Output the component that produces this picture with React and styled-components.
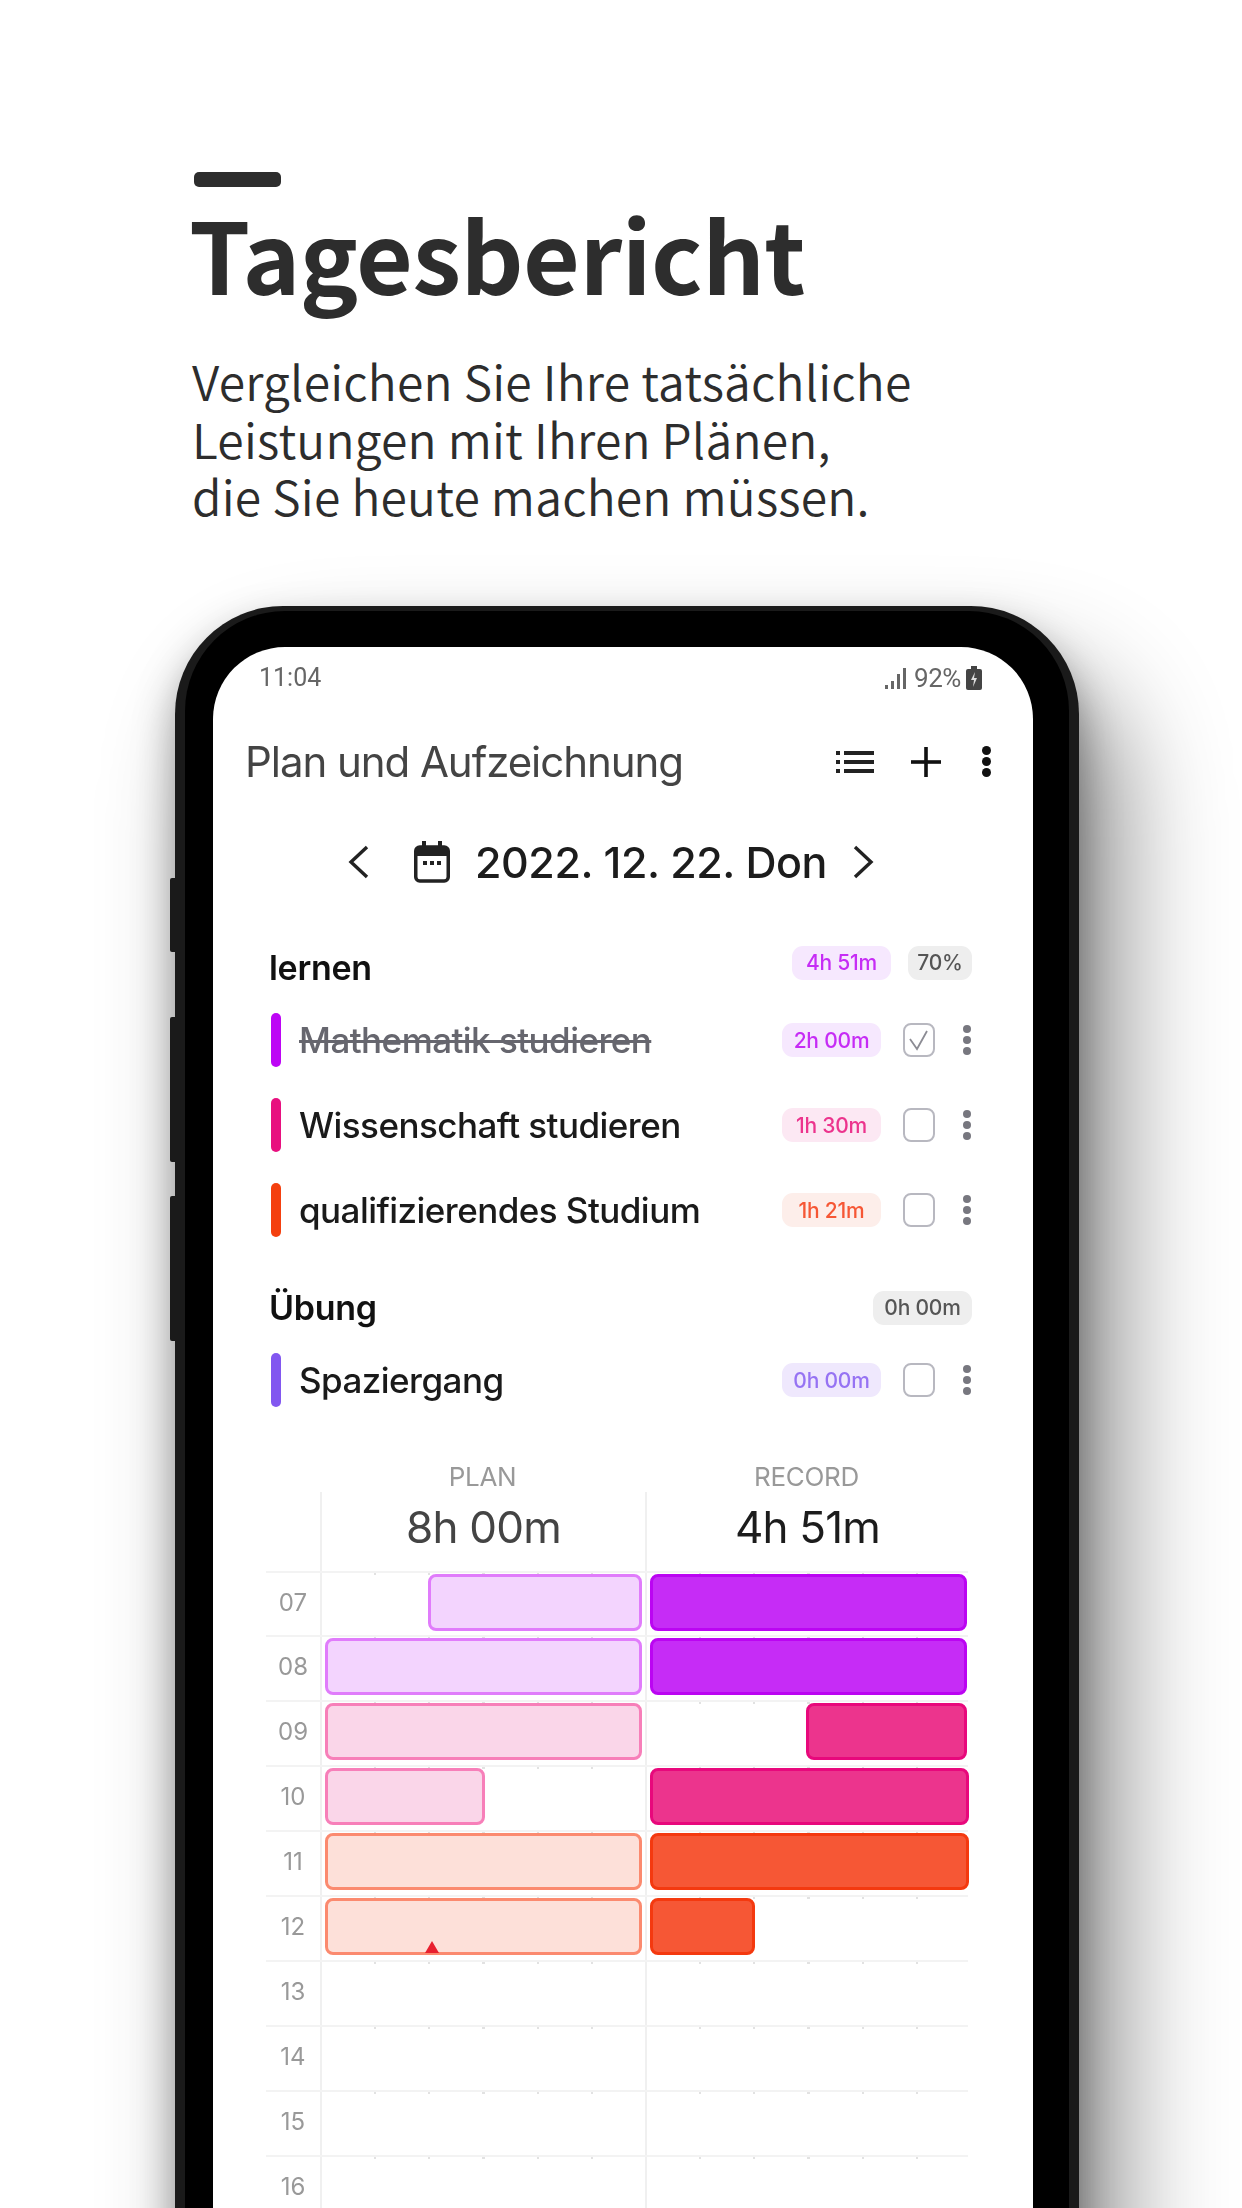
import React from 'react';
import styled, { createGlobalStyle } from 'styled-components';

const GlobalStyle = createGlobalStyle`
  html, body {
    margin: 0;
    padding: 0;
    background: #fff;
  }
`;

const Page = styled.div`
  width: 1242px;
  height: 2208px;
  overflow: hidden;
  background: #fff;
  color: #2d2d2d;
  font-family: 'Noto Sans CJK KR', 'Noto Sans', sans-serif;
`;

const Intro = styled.header`
  padding: 172px 0 0 193px;
`;

const Dash = styled.div`
  width: 87px;
  height: 15px;
  margin-left: 1px;
  border-radius: 5px;
  background: #2d2d2d;
`;

const Title = styled.h1`
  margin: 15px 0 0 -4px;
  font-size: 98px;
  font-weight: 700;
  line-height: 100px;
  letter-spacing: -0.5px;
`;

const Lead = styled.p`
  margin: 50px 0 0 -1px;
  font-size: 48px;
  font-weight: 350;
  line-height: 57.5px;
  letter-spacing: 0.2px;
`;

const Phone = styled.div`
  position: relative;
  box-sizing: border-box;
  width: 904px;
  height: 1700px;
  margin: 81px 0 0 175px;
  padding: 5px 10px 0;
  border-radius: 108px 108px 0 0;
  background: #1a1a1a;
  box-shadow: 0 20px 40px rgba(0, 0, 0, 0.35), 40px 70px 110px rgba(0, 0, 0, 0.45);
`;

const SideKey = styled.span`
  position: absolute;
  left: -5px;
  top: ${(p) => p.$top}px;
  width: 6px;
  height: ${(p) => p.$height}px;
  border-radius: 2px 0 0 2px;
  background: #1a1a1a;
`;

const Bezel = styled.div`
  box-sizing: border-box;
  height: 100%;
  padding: 36px 36px 0 28px;
  border-radius: 100px 100px 0 0;
  background: #000;
`;

const Screen = styled.div`
  height: 100%;
  border-radius: 72px 72px 0 0;
  background: #fff;
  color: #111;
  font-family: Inter, 'Liberation Sans', sans-serif;
  filter: blur(0.5px);
`;

const StatusBar = styled.div`
  display: flex;
  align-items: center;
  justify-content: space-between;
  height: 62px;
  padding: 0 51px 0 46px;
  color: #666;
  font-family: Roboto, sans-serif;
  font-size: 25px;
`;

const StatusRight = styled.div`
  display: flex;
  align-items: center;
  gap: 5px;
  font-size: 26px;
  letter-spacing: -0.4px;
`;

const AppBar = styled.div`
  display: flex;
  align-items: center;
  justify-content: space-between;
  height: 68px;
  margin-top: 19px;
  padding: 0 42px 0 32px;
`;

const AppTitle = styled.div`
  color: #444;
  font-size: 42px;
  letter-spacing: -1.05px;
`;

const AppActions = styled.div`
  display: flex;
  align-items: center;
  gap: 37px;

  svg:last-child {
    margin-left: 4px;
  }
`;

const DateBar = styled.div`
  display: flex;
  align-items: center;
  height: 60px;
  margin-top: 36px;
  padding-left: 134px;
`;

const DateText = styled.div`
  margin: 0 26px 0 25px;
  color: #1c1c1c;
  font-size: 43px;
  font-weight: 450;
  letter-spacing: -0.45px;
  white-space: nowrap;
`;

const CalendarSlot = styled.span`
  display: flex;
  margin-left: 45px;
`;

const Groups = styled.div`
  margin: 0 61px 0 56px;
  padding-top: 54px;
`;

const GroupHead = styled.div`
  display: flex;
  align-items: flex-start;
  justify-content: space-between;
  height: 52px;
  margin-top: ${(p) => p.$gap || 0}px;
`;

const GroupName = styled.div`
  font-size: 34px;
  font-weight: 600;
  line-height: 44px;
  letter-spacing: -0.3px;
`;

const GroupPills = styled.div`
  display: flex;
  gap: 17px;
  margin-top: ${(p) => p.$top || 0}px;
`;

const Pill = styled.span`
  display: flex;
  align-items: center;
  justify-content: center;
  box-sizing: border-box;
  width: ${(p) => p.$width}px;
  height: 34px;
  border-radius: 11px;
  background: ${(p) => p.$bg};
  color: ${(p) => p.$fg};
  font-size: 21px;
  font-weight: 500;
  letter-spacing: -0.2px;
  white-space: nowrap;
`;

const TaskRow = styled.div`
  display: flex;
  align-items: center;
  height: 85px;
`;

const TaskBar = styled.span`
  flex: none;
  width: 10px;
  height: 54px;
  margin-left: 2px;
  border-radius: 5px;
  background: ${(p) => p.$color};
`;

const TaskName = styled.span`
  flex: 1;
  margin-left: 18px;
  color: ${(p) => (p.$done ? '#66666e' : '#1a1a1a')};
  font-size: 35px;
  font-weight: 450;
  letter-spacing: -0.55px;
  text-decoration: ${(p) => (p.$done ? 'line-through' : 'none')};
`;

const Check = styled.span`
  display: flex;
  flex: none;
  align-items: center;
  justify-content: center;
  box-sizing: border-box;
  width: 32px;
  height: 34px;
  margin-left: 22px;
  border: 2.5px solid #b8b8c0;
  border-radius: 8px;
`;

const KebabSlot = styled.span`
  display: flex;
  flex: none;
  margin: 0 1px 0 28px;
`;

const Chart = styled.div`
  margin: 39px 65px 0 53px;
`;

const ChartGrid = styled.div`
  display: grid;
  grid-template-columns: 54px 325px 323px;
`;

const ColumnLabel = styled.div`
  color: #999;
  font-size: 26px;
  line-height: 30px;
  text-align: center;
  letter-spacing: -0.3px;
`;

const ColumnTotal = styled.div`
  box-sizing: border-box;
  height: 79px;
  padding-top: 10px;
  border-left: 2px solid #f0f0f0;
  color: ${(p) => p.$color};
  font-size: 44px;
  line-height: 50px;
  text-align: center;
  letter-spacing: -0.8px;
`;

const HourRow = styled.div`
  display: grid;
  grid-column: 1 / -1;
  grid-template-columns: 54px 325px 323px;
  box-sizing: border-box;
  height: 64.9px;
  border-top: 2px solid #f3f3f3;
`;

const HourLabel = styled.div`
  color: #999;
  font-size: 24px;
  line-height: 59px;
  text-align: center;
`;

const Cell = styled.div`
  box-sizing: border-box;
  padding-top: 1px;
  border-left: 2px solid #f0f0f0;
  background: repeating-linear-gradient(90deg, transparent 0 52px, #e2e2e2 52px 54.2px) 0 0 / 100% 2px no-repeat;
`;

const Block = styled.div`
  position: relative;
  box-sizing: border-box;
  width: ${(p) => p.$width}px;
  height: 57px;
  margin-left: ${(p) => p.$left}px;
  border: 3px solid ${(p) => p.$border};
  border-radius: 8px;
  background: ${(p) => p.$fill};
`;

const NowMark = styled.span`
  position: absolute;
  left: 97px;
  bottom: -1px;
  width: 0;
  height: 0;
  border-right: 7px solid transparent;
  border-bottom: 12px solid #e8202f;
  border-left: 7px solid transparent;
`;

const Signal = () => (
  <svg width="24" height="24" viewBox="0 0 24 24" fill="#666">
    <rect x="0" y="19" width="3" height="4" />
    <rect x="6" y="15" width="3" height="8" />
    <rect x="12" y="8" width="3" height="15" />
    <rect x="18" y="2" width="3" height="21" />
  </svg>
);

const Battery = () => (
  <svg width="16" height="24" viewBox="0 0 16 24">
    <rect x="5" y="0" width="6" height="3" fill="#444" />
    <rect x="0" y="3" width="16" height="21" rx="2" fill="#444" />
    <path d="M9 6 L5 14 H8 L7 21 L11 12 H8 Z" fill="#ddd" />
  </svg>
);

const ListIcon = () => (
  <svg width="38" height="22" viewBox="0 0 38 22" fill="#222">
    <rect x="0" y="0" width="4" height="4" />
    <rect x="0" y="9" width="4" height="4" />
    <rect x="0" y="18" width="4" height="4" />
    <rect x="8" y="0" width="30" height="4" />
    <rect x="8" y="9" width="30" height="4" />
    <rect x="8" y="18" width="30" height="4" />
  </svg>
);

const PlusIcon = () => (
  <svg width="30" height="30" viewBox="0 0 30 30" fill="#111">
    <rect x="13.2" y="0" width="3.6" height="30" />
    <rect x="0" y="13.2" width="30" height="3.6" />
  </svg>
);

const Kebab = ({ size = 8, height = 30, color = '#77777f' }) => (
  <svg width={size} height={height} viewBox={`0 0 ${size} ${height}`} fill={color}>
    <circle cx={size / 2} cy={size / 2} r={size / 2} />
    <circle cx={size / 2} cy={height / 2} r={size / 2} />
    <circle cx={size / 2} cy={height - size / 2} r={size / 2} />
  </svg>
);

const Chevron = ({ left }) => (
  <svg width="22" height="34" viewBox="0 0 22 34" fill="none" stroke="#222" strokeWidth="3.4">
    <polyline points={left ? '20,2 4,17 20,32' : '2,2 18,17 2,32'} />
  </svg>
);

const CalendarIcon = () => (
  <svg width="36" height="42" viewBox="0 0 36 42" fill="none">
    <rect x="1.75" y="6" width="32.5" height="34" rx="4" stroke="#222" strokeWidth="3.5" />
    <rect x="2" y="6" width="32" height="9" fill="#222" />
    <rect x="8" y="0" width="4" height="8" fill="#222" />
    <rect x="24" y="0" width="4" height="8" fill="#222" />
    <rect x="9" y="20" width="4" height="4" fill="#222" />
    <rect x="16" y="20" width="4" height="4" fill="#222" />
    <rect x="23" y="20" width="4" height="4" fill="#222" />
  </svg>
);

const Tick = () => (
  <svg width="22" height="24" viewBox="0 0 22 24" fill="none" stroke="#8c8c94" strokeWidth="1.8">
    <polyline points="2,11 9,21 19,3" />
  </svg>
);

const purple = { plan: ['#f3d4fe', '#e07cfb'], record: ['#c62cf6', '#bb05f2'] };
const pink = { plan: ['#fad6e9', '#f77fb9'], record: ['#ec348d', '#e8087c'] };
const orange = { plan: ['#fde0d9', '#fb8a6f'], record: ['#f65735', '#f4390f'] };

const hours = [
  { h: '07', plan: [106, 214, purple], record: [3, 317, purple] },
  { h: '08', plan: [3, 317, purple], record: [3, 317, purple] },
  { h: '09', plan: [3, 317, pink], record: [159, 161, pink] },
  { h: '10', plan: [3, 160, pink], record: [3, 319, pink] },
  { h: '11', plan: [3, 317, orange], record: [3, 319, orange] },
  { h: '12', plan: [3, 317, orange], record: [3, 105, orange], now: true },
  { h: '13' },
  { h: '14' },
  { h: '15' },
  { h: '16' },
];

function Task({ color, name, time, bg, fg, done }) {
  return (
    <TaskRow>
      <TaskBar $color={color} />
      <TaskName $done={done}>{name}</TaskName>
      <Pill $width={99} $bg={bg} $fg={fg}>{time}</Pill>
      <Check>{done && <Tick />}</Check>
      <KebabSlot><Kebab /></KebabSlot>
    </TaskRow>
  );
}

export default function App() {
  return (
    <Page>
      <GlobalStyle />
      <Intro>
        <Dash />
        <Title>Tagesbericht</Title>
        <Lead>
          Vergleichen Sie Ihre tatsächliche<br />
          Leistungen mit Ihren Plänen,<br />
          die Sie heute machen müssen.
        </Lead>
      </Intro>
      <Phone>
        <SideKey $top={272} $height={74} />
        <SideKey $top={411} $height={145} />
        <SideKey $top={590} $height={145} />
        <Bezel>
          <Screen>
            <StatusBar>
              <span>11:04</span>
              <StatusRight>
                <Signal />
                <span>92%</span>
                <Battery />
              </StatusRight>
            </StatusBar>
            <AppBar>
              <AppTitle>Plan und Aufzeichnung</AppTitle>
              <AppActions>
                <ListIcon />
                <PlusIcon />
                <Kebab size={9} height={31} color="#111" />
              </AppActions>
            </AppBar>
            <DateBar>
              <Chevron left />
              <CalendarSlot><CalendarIcon /></CalendarSlot>
              <DateText>2022. 12. 22. Don</DateText>
              <Chevron />
            </DateBar>
            <Groups>
              <GroupHead>
                <GroupName>lernen</GroupName>
                <GroupPills>
                  <Pill $width={99} $bg="#f6e8fe" $fg="#c62cf5">4h 51m</Pill>
                  <Pill $width={64} $bg="#eeeeee" $fg="#555">70%</Pill>
                </GroupPills>
              </GroupHead>
              <Task color="#bd05f5" name="Mathematik studieren" time="2h 00m" bg="#f6e8fe" fg="#c62cf5" done />
              <Task color="#e8107f" name="Wissenschaft studieren" time="1h 30m" bg="#fce8f3" fg="#ec348d" />
              <Task color="#f4400f" name="qualifizierendes Studium" time="1h 21m" bg="#fdeeea" fg="#f65735" />
              <GroupHead $gap={33}>
                <GroupName>Übung</GroupName>
                <GroupPills $top={5}>
                  <Pill $width={99} $bg="#eeeeee" $fg="#555">0h 00m</Pill>
                </GroupPills>
              </GroupHead>
              <Task color="#8257f0" name="Spaziergang" time="0h 00m" bg="#efe8fd" fg="#9673f3" />
            </Groups>
            <Chart>
              <ChartGrid>
                <span />
                <ColumnLabel>PLAN</ColumnLabel>
                <ColumnLabel>RECORD</ColumnLabel>
                <span />
                <ColumnTotal $color="#444">8h 00m</ColumnTotal>
                <ColumnTotal $color="#1c1c1c">4h 51m</ColumnTotal>
                {hours.map((row) => (
                  <HourRow key={row.h}>
                    <HourLabel>{row.h}</HourLabel>
                    <Cell>
                      {row.plan && (
                        <Block $left={row.plan[0]} $width={row.plan[1]} $fill={row.plan[2].plan[0]} $border={row.plan[2].plan[1]}>
                          {row.now && <NowMark />}
                        </Block>
                      )}
                    </Cell>
                    <Cell>
                      {row.record && (
                        <Block $left={row.record[0]} $width={row.record[1]} $fill={row.record[2].record[0]} $border={row.record[2].record[1]} />
                      )}
                    </Cell>
                  </HourRow>
                ))}
              </ChartGrid>
            </Chart>
          </Screen>
        </Bezel>
      </Phone>
    </Page>
  );
}
